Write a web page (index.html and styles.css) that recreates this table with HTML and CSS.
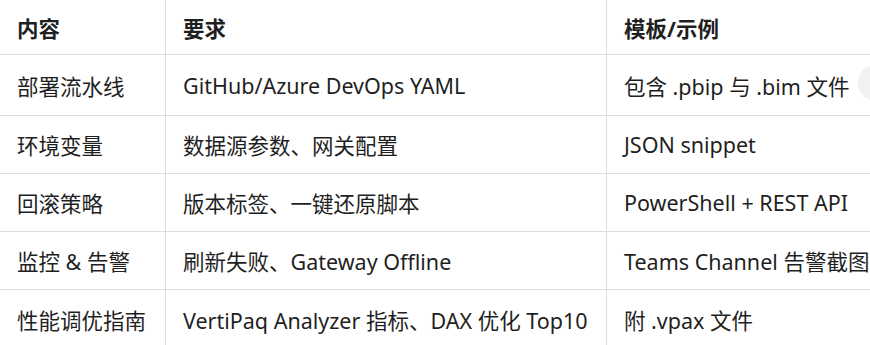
FILE: index.html
```html
<!DOCTYPE html>
<html lang="zh-CN">
<head>
<meta charset="utf-8">
<link rel="stylesheet" href="styles.css">
</head>
<body>
<div class="wrap">
  <table class="grid">
    <colgroup>
      <col class="c1"><col class="c2"><col class="c3">
    </colgroup>
    <thead>
      <tr class="head"><th>内容</th><th>要求</th><th>模板/示例</th></tr>
    </thead>
    <tbody>
      <tr class="first"><td>部署流水线</td><td>GitHub/Azure DevOps YAML</td><td>包含 .pbip 与 .bim 文件</td></tr>
      <tr><td>环境变量</td><td>数据源参数、网关配置</td><td>JSON snippet</td></tr>
      <tr><td>回滚策略</td><td>版本标签、一键还原脚本</td><td>PowerShell + REST API</td></tr>
      <tr><td>监控 &amp; 告警</td><td>刷新失败、Gateway Offline</td><td>Teams Channel 告警截图</td></tr>
      <tr class="last"><td>性能调优指南</td><td>VertiPaq Analyzer 指标、DAX 优化 Top10</td><td>附 .vpax 文件</td></tr>
    </tbody>
  </table>
  <span class="fab"></span>
</div>
</body>
</html>
```
FILE: styles.css
```css
html, body {
  margin: 0;
  padding: 0;
  background: #ffffff;
  overflow: hidden;
}
.wrap {
  position: relative;
  width: 870px;
  height: 345px;
  overflow: hidden;
}
.grid {
  border-collapse: separate;
  border-spacing: 0;
  width: 960px;
  table-layout: fixed;
  font-family: "Noto Sans", "Noto Sans CJK SC", sans-serif;
  font-size: 21.5px;
  color: #1f1f1f;
}
.c1 { width: 166px; }
.c2 { width: 441px; }
.c3 { width: 353px; }
th, td {
  text-align: left;
  padding: 0 0 0 17px;
  border-bottom: 1px solid #dddddd;
  white-space: nowrap;
  vertical-align: middle;
}
th:not(:last-child), td:not(:last-child) {
  border-right: 1px solid #dddddd;
}
td:nth-child(n+2), th:nth-child(n+2) {
  padding-left: 17px;
}
th {
  font-weight: 700;
}
.head { height: 55px; }
.first { height: 61px; }
tbody tr { height: 58px; }
.last td { border-bottom: none; }
.fab {
  position: absolute;
  left: 858px;
  top: 65px;
  width: 36px;
  height: 36px;
  border-radius: 50%;
  background: #f1f1f1;
}
```
